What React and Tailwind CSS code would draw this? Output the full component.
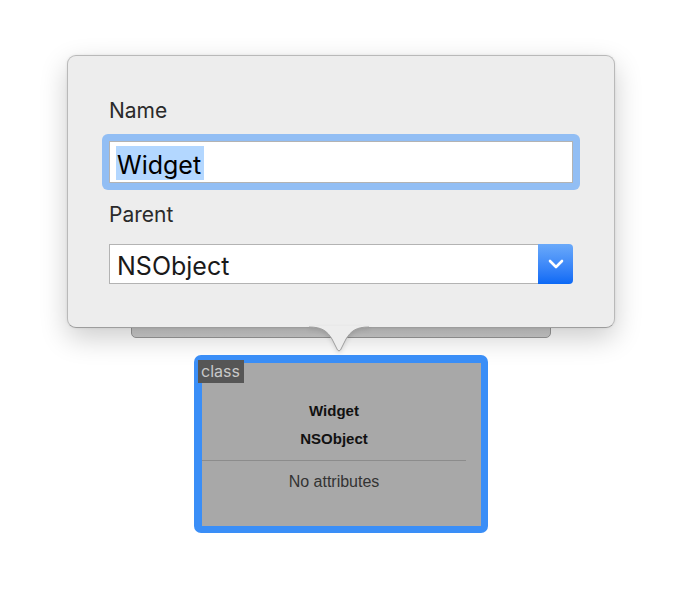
import React from 'react';

const sans = { fontFamily: 'Inter, "Noto Sans", sans-serif' };

function Chevron() {
  return (
    <svg width="16" height="10" viewBox="0 0 16 10" fill="none">
      <path d="M2 2 L8 8 L14 2" stroke="white" strokeWidth="2.6" strokeLinecap="round" strokeLinejoin="round" />
    </svg>
  );
}

function PopoverArrow() {
  return (
    <svg
      width="60"
      height="28"
      viewBox="0 0 60 28"
      className="absolute left-[242px] top-[271px] drop-shadow-[0_2px_2px_rgba(0,0,0,0.12)]"
    >
      <path
        d="M0 0 L0 1 C13 1 18 5 23 13 L27 21 Q30 29 33 21 L37 13 C42 5 47 1 60 1 L60 0 Z"
        fill="#ededed"
      />
      <path
        d="M0 1 C13 1 18 5 23 13 L27 21 Q30 29 33 21 L37 13 C42 5 47 1 60 1"
        fill="none"
        stroke="#9d9d9d"
        strokeWidth="1"
      />
    </svg>
  );
}

function ClassCard() {
  return (
    <div className="relative mt-[27px] h-[178px] w-[294px] rounded-[7px] bg-[#3a8ef7] pb-[7px] pl-[8px] pr-[7px] pt-[8px]">
      <div
        className="flex h-full w-full flex-col bg-[#a8a8a8]"
        style={{ fontFamily: '"Liberation Sans", Arial, sans-serif' }}
      >
        <div className="flex w-[264px] flex-col items-center pt-[38px]">
          <div className="text-[15px] font-bold leading-[20px] text-[#111]">Widget</div>
          <div className="mt-[8px] text-[15px] font-bold leading-[20px] text-[#111]">NSObject</div>
          <div className="mt-[11px] h-px w-full bg-[#8c8c8c]" />
          <div className="mt-[11px] text-[16px] leading-[20px] text-[#333]">No attributes</div>
        </div>
      </div>
      <div
        className="absolute left-[4px] top-[5px] flex h-[23px] w-[46px] items-end bg-[#565656] pb-[2px] pl-[3px] text-[16px] leading-[20px] text-[#c9c9c9]"
        style={sans}
      >
        class
      </div>
    </div>
  );
}

export default function App() {
  return (
    <div className="h-[608px] w-[676px] overflow-hidden bg-white pl-[67px] pt-[55px]" style={sans}>
      <div className="flex w-[548px] flex-col items-center">
        <div className="relative w-full">
          {/* sheet peeking out behind the popover */}
          <div className="absolute left-[64px] top-[250px] h-[33px] w-[420px] rounded-b-[5px] border border-[#999] bg-gradient-to-b from-[#c2c2c2] to-[#cdcdcd]" />

          <div className="relative h-[273px] w-full rounded-[9px] border border-[#b9b9b9] border-b-[#9d9d9d] bg-[#ededed] px-[41px] pt-[44px] shadow-[0_10px_28px_rgba(0,0,0,0.2),0_0_3px_rgba(0,0,0,0.08)]">
            <div className="text-[21px] leading-[21px] text-[#2a2a2a]">Name</div>

            <div className="-mx-[7px] mt-[13px] rounded-[6px] bg-[#92bef4] p-[7px]">
              <div className="h-[42px] border border-[#b3b3b3] bg-white pl-[6px] pt-[4px]">
                <span className="inline-block h-[34px] bg-[#b3d7ff] pl-[1px] pr-[3px] text-[25px] leading-[38px] text-black">
                  Widget
                </span>
              </div>
            </div>

            <div className="mt-[14px] text-[21px] leading-[21px] text-[#2a2a2a]">Parent</div>

            <div className="mt-[19px] flex h-[40px]">
              <div className="h-[40px] flex-1 border border-r-0 border-[#b3b3b3] bg-white pl-[7px] pt-[5px] text-[25px] leading-[33px] text-[#1a1a1a]">
                NSObject
              </div>
              <div className="flex h-[40px] w-[35px] items-center justify-center rounded-r-[4px] bg-gradient-to-b from-[#6aa9fa] to-[#0a69f5]">
                <Chevron />
              </div>
            </div>
          </div>

          <PopoverArrow />
        </div>

        <ClassCard />
      </div>
    </div>
  );
}
